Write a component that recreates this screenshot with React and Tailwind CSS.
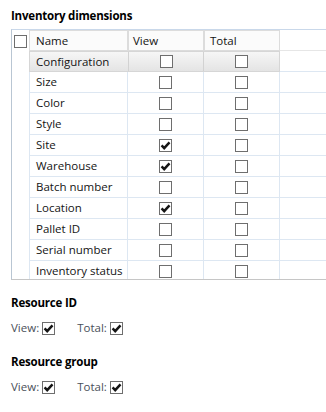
const dimensions = [
  { name: "Configuration", view: false, total: false, selected: true },
  { name: "Size", view: false, total: false },
  { name: "Color", view: false, total: false },
  { name: "Style", view: false, total: false },
  { name: "Site", view: true, total: false },
  { name: "Warehouse", view: true, total: false },
  { name: "Batch number", view: false, total: false },
  { name: "Location", view: true, total: false },
  { name: "Pallet ID", view: false, total: false },
  { name: "Serial number", view: false, total: false },
  { name: "Inventory status", view: false, total: false }
];

const CheckBox = ({ checked }) => (
  <span className="flex h-[13px] w-[13px] shrink-0 items-center justify-center border border-[#6e6e6e] bg-white">
    {checked ? (
      <svg width="11" height="11" viewBox="0 0 11 11">
        <path d="M1.6 5.4 L4.2 8.1 L9.5 2.4" fill="none" stroke="#151515" strokeWidth="2.5" />
      </svg>
    ) : null}
  </span>
);

const App = () => {
  return (
    <div
      className="h-[412px] w-[326px] overflow-hidden bg-white pl-[11px] pt-[8px] text-[11.5px] text-[#141414]"
      style={{ fontFamily: '"Open Sans", "Noto Sans", sans-serif' }}
    >
      <h2 className="text-[11.5px] font-bold leading-[16px] tracking-[-0.2px] text-black">Inventory dimensions</h2>

      <div className="mt-[5px] h-[251px] w-[340px] overflow-hidden border-t border-l border-b border-t-[#c9d8ea] border-l-[#b9c6d3] border-b-[#c6c6c6]">
        <div className="flex h-[21px]">
          <div className="flex w-[17px] shrink-0 items-start pl-[2px] pt-[5px]">
            <CheckBox />
          </div>
          <div className="flex w-[99px] shrink-0 items-center border border-[#dcdcdc] bg-[#fbfbfb] pl-[6px]">Name</div>
          <div className="flex w-[76px] shrink-0 items-center border border-[#dcdcdc] bg-[#fbfbfb] pl-[4px]">View</div>
          <div className="flex w-[76px] shrink-0 items-center border border-[#dcdcdc] bg-[#fbfbfb] pl-[5px]">Total</div>
          <div className="flex-1 border-b border-[#e6e6e6]" />
        </div>

        {dimensions.map((item) => (
          <div key={item.name} className="flex h-[21px]">
            <div className="w-[17px] shrink-0" />
            <div
              className={
                item.selected
                  ? "flex w-[251px] shrink-0 border border-[#d6d6d6] bg-gradient-to-b from-[#f6f6f6] to-[#e4e4e4]"
                  : "flex w-[251px] shrink-0"
              }
            >
              <div
                className={
                  item.selected
                    ? "flex w-[98px] shrink-0 items-center pl-[6px]"
                    : "flex w-[99px] shrink-0 items-center border-l border-r border-b border-[#dde7f2] pl-[6px]"
                }
              >
                {item.name}
              </div>
              <div
                className={
                  item.selected
                    ? "flex w-[76px] shrink-0 items-center justify-center border-l border-r border-[#d2d2d2]"
                    : "flex w-[76px] shrink-0 items-center justify-center border-r border-b border-[#dde7f2]"
                }
              >
                <CheckBox checked={item.view} />
              </div>
              <div
                className={
                  item.selected
                    ? "flex w-[75px] shrink-0 items-center justify-center"
                    : "flex w-[76px] shrink-0 items-center justify-center border-r border-b border-[#dde7f2]"
                }
              >
                <CheckBox checked={item.total} />
              </div>
            </div>
            <div className="flex-1 border-b border-[#dde7f2]" />
          </div>
        ))}
      </div>

      <h3 className="mt-[15px] text-[11.5px] font-bold leading-[16px] tracking-[-0.2px] text-black">Resource ID</h3>
      <div className="mt-[9px] flex h-[16px] items-center text-[#4a505a]">
        <span>View:</span>
        <span className="ml-[3px]">
          <CheckBox checked />
        </span>
        <span className="ml-[22px]">Total:</span>
        <span className="ml-[3px]">
          <CheckBox checked />
        </span>
      </div>

      <h3 className="mt-[18px] text-[11.5px] font-bold leading-[16px] tracking-[-0.2px] text-black">Resource group</h3>
      <div className="mt-[9px] flex h-[16px] items-center text-[#4a505a]">
        <span>View:</span>
        <span className="ml-[3px]">
          <CheckBox checked />
        </span>
        <span className="ml-[22px]">Total:</span>
        <span className="ml-[3px]">
          <CheckBox checked />
        </span>
      </div>
    </div>
  );
};

export default App;
